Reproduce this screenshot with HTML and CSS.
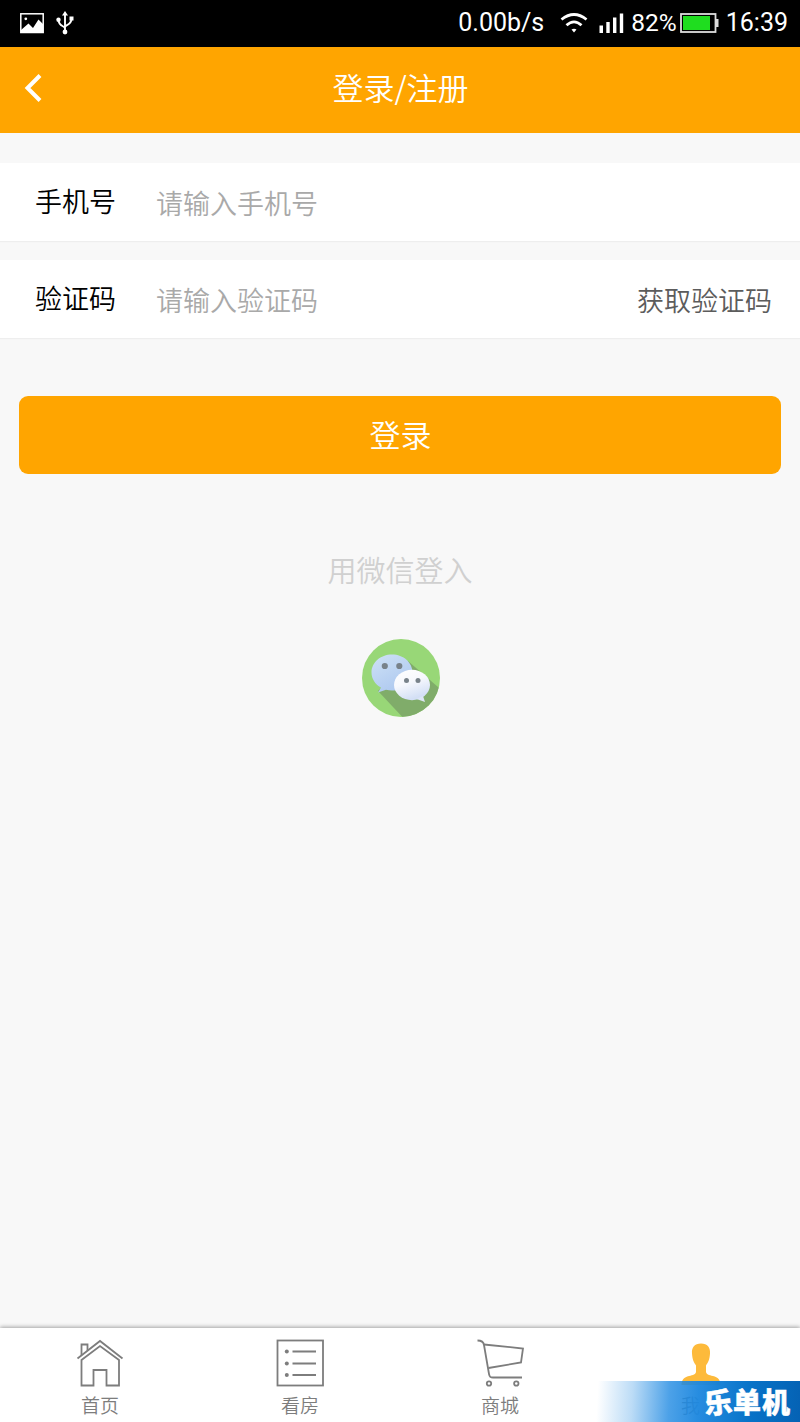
FILE: index.html
```html
<!DOCTYPE html>
<html lang="zh-CN">
<head>
    <meta charset="UTF-8">
    <meta name="viewport" content="width=device-width, initial-scale=1.0">
    <title>登录/注册</title>
    <link rel="stylesheet" href="styles.css">
</head>
<body>

<div class="status-bar">
    <svg class="icon-picture" width="24" height="21" viewBox="0 0 24 21">
        <rect x="0.8" y="0.8" width="22.4" height="18.7" fill="none" stroke="#fff" stroke-width="1.5"/>
        <circle cx="5.8" cy="5.8" r="1.4" fill="#fff"/>
        <path d="M1 17l7.500-6.500 4.500 4.500L18.500 6.500 23 11v8.500H1z" fill="#fff"/>
    </svg>
    <svg class="icon-usb" width="18" height="24" viewBox="0 0 18 24">
        <path d="M9 21V3M9 17.500C9 14.500 2.500 16 2.500 8.500M9 16c0-2.500 6.500-1.500 6.500-8.500" fill="none" stroke="#fff" stroke-width="1.9"/>
        <path d="M9 0l3 4.500H6z" fill="#fff"/>
        <circle cx="9" cy="21" r="2.400" fill="#fff"/>
        <circle cx="2.500" cy="8.800" r="2.200" fill="#fff"/>
        <rect x="13.500" y="5.500" width="4" height="4" fill="#fff"/>
    </svg>
    <span class="speed">0.00b/s</span>
    <svg class="icon-wifi" width="28" height="20" viewBox="0 0 28 20">
        <path d="M1.500 6.500Q14-3.500 26.500 6.500M6.500 12.300Q14 5.500 21.500 12.300" fill="none" stroke="#fff" stroke-width="2.800"/>
        <path d="M11.500 16.600Q14 14.800 16.500 16.600L14 19.500z" fill="#fff"/>
    </svg>
    <svg class="icon-signal" width="25" height="20" viewBox="0 0 25 20">
        <path d="M0.500 12.500h3.500V20H0.500zM7.300 9h3.400v11H7.300zM14 4.500h3.400V20H14zM20.800 0.500h3.400V20h-3.400z" fill="#fff"/>
    </svg>
    <span class="percent">82%</span>
    <svg class="icon-battery" width="39" height="20" viewBox="0 0 39 20">
        <rect x="1" y="1" width="34.500" height="18" fill="none" stroke="#ddd" stroke-width="1.800"/>
        <rect x="3" y="3" width="27" height="14" fill="#1fdd1f"/>
        <rect x="36" y="6" width="2.500" height="8" fill="#ddd"/>
    </svg>
    <span class="time">16:39</span>
</div>

<div class="header">
    <svg class="back" width="20" height="30" viewBox="0 0 20 30">
        <path d="M17 2.500L4.500 15l12.500 12.500" fill="none" stroke="#fff" stroke-width="4"/>
    </svg>
    <h1>登录/注册</h1>
</div>

<div class="content">
    <div class="field">
        <label for="phone">手机号</label>
        <input type="text" id="phone" placeholder="请输入手机号">
    </div>
    <div class="field">
        <label for="code">验证码</label>
        <input type="text" id="code" placeholder="请输入验证码">
        <span class="get-code">获取验证码</span>
    </div>

    <button class="login">登录</button>

    <p class="wechat-text">用微信登入</p>
    <svg class="wechat" width="79" height="78" viewBox="0 0 79 78">
        <defs>
            <clipPath id="circle"><circle cx="40" cy="39" r="39"/></clipPath>
            <linearGradient id="blue" x1="0" y1="0" x2="0.6" y2="1">
                <stop offset="0" stop-color="#cfe2f6"/>
                <stop offset="1" stop-color="#adc8ef"/>
            </linearGradient>
            <linearGradient id="white" x1="0" y1="0" x2="0.4" y2="1">
                <stop offset="0" stop-color="#fff"/>
                <stop offset="0.5" stop-color="#f6f8fd"/>
                <stop offset="1" stop-color="#d3dff5"/>
            </linearGradient>
        </defs>
        <g clip-path="url(#circle)">
            <rect width="79" height="78" fill="#98d777"/>
            <path d="M47 22L85 55V84H47L17 52z" fill="#80ac6a"/>
        </g>
        <path d="M31 15.500c11.500 0 20.500 8 20.500 18S42.500 51.500 31 51.500c-2 0-4-.3-6-.8L17 53.500l3-5c-6-3.300-9.500-8.800-9.500-15 0-10 9-18 20.500-18z" fill="url(#blue)"/>
        <ellipse cx="51" cy="46" rx="18" ry="15.200" fill="url(#white)"/>
        <path d="M55.500 60l8.500 3-2-6z" fill="#dce5f6"/>
        <g fill="#78828a">
            <circle cx="23.800" cy="27" r="3.100"/>
            <circle cx="38.300" cy="27" r="3.100"/>
            <circle cx="45.500" cy="41.500" r="2.500"/>
            <circle cx="57" cy="41.500" r="2.500"/>
        </g>
    </svg>
</div>

<div class="tab-bar">
    <div class="tab">
        <svg width="48" height="50" viewBox="0 0 48 50">
            <g fill="none" stroke="#7d7d7d" stroke-width="1.800">
                <path d="M1.500 20.500L24 3l22.500 17.500"/>
                <path d="M5.500 22v25.500H17.500V32h13v15.500H43V22L24 8z"/>
                <path d="M5.500 17V6.500H11.500V12.500"/>
            </g>
        </svg>
        <span>首页</span>
    </div>
    <div class="tab">
        <svg width="48" height="50" viewBox="0 0 48 50">
            <rect x="1.500" y="2.500" width="45.500" height="45" fill="none" stroke="#7d7d7d" stroke-width="1.800"/>
            <path d="M16.500 13.500H40M16.500 25.500H40M16.500 37H40" stroke="#7d7d7d" stroke-width="1.800"/>
            <g fill="#7d7d7d">
                <circle cx="10.800" cy="13.500" r="2"/>
                <circle cx="10.800" cy="25.500" r="2"/>
                <circle cx="10.800" cy="37" r="2"/>
            </g>
        </svg>
        <span>看房</span>
    </div>
    <div class="tab">
        <svg width="48" height="50" viewBox="0 0 48 50">
            <g fill="none" stroke="#7d7d7d" stroke-width="1.800">
                <path d="M1.500 2.500C5.500 2.500 7.500 3.500 8 7L13 36c.5 3 1.500 3.500 4 3.500H46"/>
                <path d="M8 6.500L47 10.500 45 24.500 12.500 30"/>
                <circle cx="13" cy="45.500" r="2.200"/>
                <circle cx="40.300" cy="45.500" r="2.200"/>
            </g>
        </svg>
        <span>商城</span>
    </div>
    <div class="tab active">
        <svg width="48" height="50" viewBox="0 0 48 50">
            <path d="M25 5.500c6.500 0 9.500 4 9 10-.3 6-2 9-4 12v6c0 3 3 3.500 7 4.500 5 1.200 7.500 4 7.500 9H5.500c0-5 2.500-7.800 7.500-9 4-1 7-1.500 7-4.500v-6c-2-3-3.700-6-4-12-.5-6 2.500-10 9-10z" fill="#fdba3b"/>
        </svg>
        <span>我</span>
    </div>
</div>

<div class="watermark">
    <span class="first">乐</span><span>单</span><span>机</span>
</div>

</body>
</html>
```
FILE: styles.css
```css
* {
    box-sizing: border-box;
}
body {
    margin: 0;
    height: 1422px;
    display: flex;
    flex-direction: column;
    position: relative;
    overflow: hidden;
    background-color: #f8f8f8;
    font-family: "Noto Sans CJK SC", sans-serif;
    font-weight: 350;
}
svg {
    display: block;
    flex-shrink: 0;
}

/* status bar */
.status-bar {
    height: 46.5px;
    flex-shrink: 0;
    display: flex;
    align-items: center;
    padding: 0 12px 0 20px;
    background-color: #000;
    color: #fff;
    font-family: Roboto, sans-serif;
    font-size: 25px;
    font-weight: 400;
    line-height: 48px;
}
.icon-usb {
    margin-left: 12px;
}
.speed {
    margin-left: auto;
}
.icon-wifi {
    margin-left: 16px;
}
.icon-signal {
    margin-left: 11px;
}
.percent {
    margin-left: 7px;
    font-size: 24.5px;
}
.icon-battery {
    margin-left: 3px;
}
.time {
    margin-left: 7px;
}

/* header */
.header {
    height: 86px;
    flex-shrink: 0;
    display: flex;
    align-items: center;
    padding: 0 23px 3px;
    background-color: #ffa500;
    color: #fff;
}
.header h1 {
    flex: 1;
    margin: 0 19px 0 0;
    padding-bottom: 3px;
    text-align: center;
    font-size: 31px;
    font-weight: 350;
    line-height: 46px;
}

/* form */
.content {
    flex: 1;
    display: flex;
    flex-direction: column;
    padding-top: 30.5px;
}
.field {
    display: flex;
    align-items: center;
    height: 78px;
    margin-bottom: 19px;
    padding: 0 28px 0 35px;
    background-color: #fff;
    box-shadow: 0 1px 1px #eee;
    font-size: 27px;
}
.field label {
    width: 121px;
    padding-bottom: 3px;
    color: #000;
}
.field input {
    flex: 1;
    min-width: 0;
    height: 50px;
    padding: 1px 0 0;
    border: 0;
    outline: 0;
    background: none;
    font: inherit;
}
.field input::placeholder {
    color: #a9a9a9;
}
.get-code {
    padding-top: 1px;
    color: #5c5c5c;
}
.login {
    height: 78px;
    margin: 39px 19px 0;
    padding: 0 0 3px 1px;
    border: 0;
    border-radius: 9px;
    background-color: #ffa500;
    color: #fff;
    font-family: inherit;
    font-size: 31px;
    font-weight: 350;
}
.wechat-text {
    margin: 73px 0 0;
    text-align: center;
    color: #d0d0d0;
    font-size: 29px;
    line-height: 44px;
}
.wechat {
    margin: 48px auto 0;
}

/* bottom tabs */
.tab-bar {
    height: 94px;
    flex-shrink: 0;
    display: flex;
    background-color: #fff;
    box-shadow: 0 -1px 4px rgba(0, 0, 0, 0.35);
}
.tab {
    flex: 1;
    display: flex;
    flex-direction: column;
    align-items: center;
    padding-top: 10px;
    color: #7d7d7d;
    font-size: 19px;
    line-height: 28px;
}
.tab span {
    margin-top: 3px;
}
.tab.active span {
    margin-right: 19px;
}

/* corner logo, lies over the last tab */
.watermark {
    position: absolute;
    right: 0;
    bottom: 0;
    width: 204px;
    height: 41px;
    display: flex;
    justify-content: flex-end;
    padding-right: 9px;
    background: linear-gradient(93deg, rgba(32, 138, 226, 0) 1%, rgba(32, 138, 226, 0.3) 18%, rgba(32, 138, 226, 0.8) 36%, rgba(30, 136, 223, 0.96) 50%, #0873c8 75%, #0562b4);
    color: #fff;
    font-size: 28px;
    font-weight: 900;
    line-height: 40px;
    -webkit-text-stroke: 0.5px #fff;
}
.watermark span {
    width: 29px;
}
.watermark .first {
    transform: rotate(-6deg);
}
```
